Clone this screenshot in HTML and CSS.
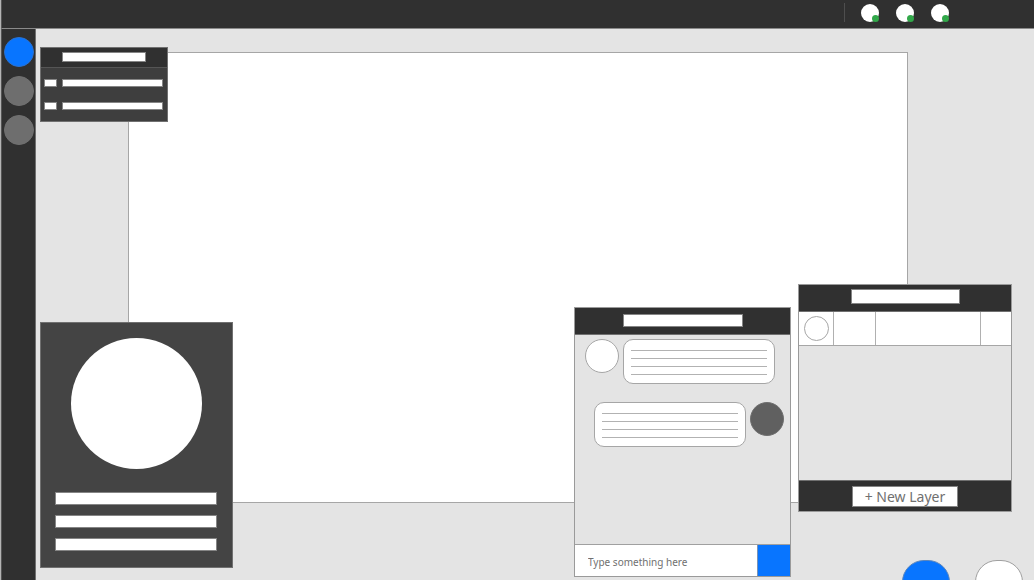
FILE: index.html
```html
<!DOCTYPE html>
<html lang="en">
<head>
<meta charset="utf-8">
<title>Canvas editor</title>
<link rel="stylesheet" href="styles.css">
</head>
<body>
<header class="topbar">
  <span class="divider"></span>
  <span class="user"><i class="status"></i></span>
  <span class="user"><i class="status"></i></span>
  <span class="user"><i class="status"></i></span>
</header>
<div class="main">
  <nav class="sidebar">
    <button class="tool active" type="button" aria-label="Tool 1"></button>
    <button class="tool" type="button" aria-label="Tool 2"></button>
    <button class="tool" type="button" aria-label="Tool 3"></button>
  </nav>
  <main class="workspace">
    <div class="artboard"></div>

    <section class="panel options">
      <div class="panel-head"><span class="bar"></span></div>
      <div class="option"><span class="bar key"></span><span class="bar value"></span></div>
      <div class="option"><span class="bar key"></span><span class="bar value"></span></div>
    </section>

    <section class="panel profile">
      <div class="portrait"></div>
      <span class="bar"></span>
      <span class="bar"></span>
      <span class="bar"></span>
    </section>

    <section class="panel chat">
      <div class="panel-head"><span class="bar"></span></div>
      <div class="messages">
        <div class="message">
          <span class="avatar"></span>
          <div class="bubble"><hr><hr><hr><hr></div>
        </div>
        <div class="message own">
          <div class="bubble"><hr><hr><hr><hr></div>
          <span class="avatar"></span>
        </div>
      </div>
      <form class="compose">
        <input class="field" type="text" placeholder="Type something here" aria-label="Message">
        <button class="send" type="button" aria-label="Send"></button>
      </form>
    </section>

    <section class="panel layers">
      <div class="panel-head"><span class="bar"></span></div>
      <div class="layer">
        <span class="cell"><i class="ring"></i></span>
        <span class="cell"></span>
        <span class="cell"></span>
        <span class="cell"></span>
      </div>
      <div class="layers-foot"><button class="new-layer" type="button">+ New Layer</button></div>
    </section>

    <div class="actions">
      <button class="action primary" type="button" aria-label="Primary action"></button>
      <button class="action" type="button" aria-label="Secondary action"></button>
    </div>
  </main>
</div>
</body>
</html>
```
FILE: styles.css
```css
* {
  box-sizing: border-box;
}

body {
  margin: 0;
  height: 100vh;
  display: flex;
  flex-direction: column;
  overflow: hidden;
  border-left: 1px solid #b4b4b4;
  background: #e4e4e4;
  font-family: "Noto Sans", "Open Sans", sans-serif;
  color: #707070;
}

button,
input {
  margin: 0;
  padding: 0;
  border: 0;
  font: inherit;
  color: inherit;
}

.topbar {
  flex: none;
  height: 29px;
  display: flex;
  align-items: center;
  justify-content: flex-end;
  gap: 17px;
  padding: 0 85px 3px 0;
  border-left: 1px solid #555;
  border-bottom: 1px solid #8a8a8a;
  background: #303030;
}

.divider {
  width: 1px;
  height: 19px;
  margin-right: -1px;
  background: #4e4e4e;
}

.user {
  position: relative;
  width: 18px;
  height: 18px;
  border-radius: 50%;
  background: #fff;
}

.status {
  position: absolute;
  right: 0;
  bottom: 0;
  width: 7px;
  height: 7px;
  border-radius: 50%;
  background: #32a84a;
}

.main {
  flex: 1;
  min-height: 0;
  display: flex;
}

.sidebar {
  flex: none;
  width: 35px;
  display: flex;
  flex-direction: column;
  align-items: center;
  gap: 9px;
  padding-top: 8px;
  border-left: 1px solid #555;
  border-right: 1px solid #707070;
  background: #303030;
}

.tool {
  width: 30px;
  height: 30px;
  border: 1px solid #707070;
  border-radius: 50%;
  background: #6e6e6e;
}

.tool.active {
  border-color: #2b72d0;
  background: #0875ff;
}

.workspace {
  position: relative;
  flex: 1;
  display: flex;
  padding: 23px 126px 77px 92px;
}

.artboard {
  flex: 1;
  border: 1px solid #a6a6a6;
  background: #fff;
}

.panel {
  position: absolute;
  display: flex;
  flex-direction: column;
  border: 1px solid #707070;
}

.panel-head {
  flex: none;
  height: 27px;
  display: flex;
  align-items: center;
  justify-content: center;
  padding-bottom: 1px;
  border-bottom: 1px solid #707070;
  background: #303030;
}

.bar {
  border: 1px solid #858585;
  background: #fff;
}

.options {
  top: 18px;
  left: 4px;
  width: 128px;
  height: 75px;
  background: #3e3e3e;
}

.options .panel-head {
  height: 20px;
  border-color: #555;
}

.options .panel-head .bar {
  width: 84px;
  height: 10px;
}

.option {
  display: flex;
  gap: 5px;
  padding: 11px 4px 0 3px;
}

.option + .option {
  padding-top: 15px;
}

.option .bar {
  height: 8px;
}

.key {
  width: 13px;
}

.value {
  flex: 1;
}

.profile {
  left: 4px;
  bottom: 12px;
  width: 193px;
  height: 246px;
  gap: 10px;
  padding: 15px 15px 0 14px;
  background: #444;
}

.portrait {
  width: 131px;
  height: 131px;
  margin: 0 auto 13px;
  border-radius: 50%;
  background: #fff;
}

.profile .bar {
  height: 13px;
}

.chat {
  right: 243px;
  bottom: 3px;
  width: 217px;
  height: 270px;
  border-color: #9a9a9a;
  background: #e4e4e4;
}

.chat .bar {
  width: 120px;
  height: 13px;
}

.messages {
  flex: 1;
  display: flex;
  flex-direction: column;
  gap: 18px;
  padding: 4px 6px 0 10px;
}

.message {
  display: flex;
  gap: 4px;
}

.own {
  justify-content: flex-end;
}

.avatar {
  width: 34px;
  height: 34px;
  border: 1px solid #a6a6a6;
  border-radius: 50%;
  background: #fff;
}

.own .avatar {
  border-color: #707070;
  background: #606060;
}

.bubble {
  width: 152px;
  height: 45px;
  display: flex;
  flex-direction: column;
  gap: 7px;
  padding: 10px 7px 0;
  border: 1px solid #a6a6a6;
  border-radius: 10px;
  background: #fff;
}

.bubble hr {
  flex: none;
  width: 100%;
  height: 1px;
  margin: 0;
  border: 0;
  background: #b2b2b2;
}

.compose {
  flex: none;
  height: 32px;
  display: flex;
  border-top: 1px solid #a0a0a0;
}

.field {
  flex: 1;
  min-width: 0;
  padding: 2px 13px 0;
  background: #fff;
  font-size: 10px;
}

.field::placeholder {
  color: inherit;
  opacity: 1;
}

.send {
  width: 33px;
  border-left: 1px solid #7a93b5;
  background: #0875ff;
}

.layers {
  right: 22px;
  bottom: 68px;
  width: 214px;
  height: 228px;
  border-color: #9a9a9a;
  background: #e4e4e4;
}

.layers .panel-head {
  padding-bottom: 3px;
}

.layers .bar {
  width: 109px;
  height: 15px;
}

.layer {
  display: grid;
  grid-template-columns: 35px 42px 1fr 30px;
  height: 34px;
  border-bottom: 1px solid #a6a6a6;
}

.cell {
  display: flex;
  align-items: center;
  justify-content: center;
  border-right: 1px solid #b0b0b0;
  background: #fff;
}

.cell:last-child {
  border-right: 0;
}

.ring {
  width: 25px;
  height: 25px;
  border: 1px solid #a6a6a6;
  border-radius: 50%;
}

.layers-foot {
  height: 31px;
  margin-top: auto;
  display: flex;
  align-items: center;
  justify-content: center;
  border-top: 1px solid #707070;
  background: #303030;
}

.new-layer {
  width: 106px;
  height: 21px;
  border: 1px solid #858585;
  background: #fff;
  font-size: 14px;
  line-height: 19px;
}

.actions {
  position: absolute;
  right: 11px;
  bottom: -28px;
  display: flex;
  gap: 25px;
}

.action {
  width: 48px;
  height: 48px;
  border: 1px solid #a0a0a0;
  border-radius: 22px;
  background: #fff;
}

.primary {
  border-color: #5b86bd;
  background: #0875ff;
}
```
